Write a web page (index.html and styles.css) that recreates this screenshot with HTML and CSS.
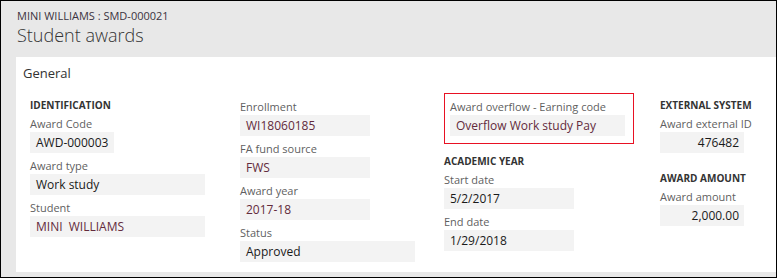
FILE: index.html
```html
<!DOCTYPE html>
<html lang="en">
<head>
    <meta charset="UTF-8">
    <title>Student awards</title>
    <link rel="stylesheet" href="styles.css">
</head>
<body>
    <div class="page">
        <div class="header">
            <div class="crumb">MINI WILLIAMS : SMD-000021</div>
            <div class="title">Student awards</div>
        </div>
        <div class="card">
            <div class="card-title">General</div>
            <div class="columns">
                <div class="col col-1">
                    <div class="group-title">IDENTIFICATION</div>
                    <div class="field">
                        <div class="label">Award Code</div>
                        <div class="value w-short">AWD-000003</div>
                    </div>
                    <div class="field">
                        <div class="label">Award type</div>
                        <div class="value w-wide">Work study</div>
                    </div>
                    <div class="field">
                        <div class="label">Student</div>
                        <div class="value w-wide link">MINI&nbsp; WILLIAMS</div>
                    </div>
                </div>
                <div class="col col-2">
                    <div class="field">
                        <div class="label">Enrollment</div>
                        <div class="value w-mid link">WI18060185</div>
                    </div>
                    <div class="field">
                        <div class="label">FA fund source</div>
                        <div class="value w-mid link">FWS</div>
                    </div>
                    <div class="field">
                        <div class="label">Award year</div>
                        <div class="value w-mid link">2017-18</div>
                    </div>
                    <div class="field">
                        <div class="label">Status</div>
                        <div class="value w-wide">Approved</div>
                    </div>
                </div>
                <div class="col col-3">
                    <div class="highlight">
                        <div class="field">
                            <div class="label">Award overflow - Earning code</div>
                            <div class="value w-wide link">Overflow Work study Pay</div>
                        </div>
                    </div>
                    <div class="group-title spaced">ACADEMIC YEAR</div>
                    <div class="field">
                        <div class="label">Start date</div>
                        <div class="value w-mid">5/2/2017</div>
                    </div>
                    <div class="field">
                        <div class="label">End date</div>
                        <div class="value w-mid">1/29/2018</div>
                    </div>
                </div>
                <div class="col col-4">
                    <div class="group-title">EXTERNAL SYSTEM</div>
                    <div class="field">
                        <div class="label">Award external ID</div>
                        <div class="value w-short num">476482</div>
                    </div>
                    <div class="group-title spaced-2">AWARD AMOUNT</div>
                    <div class="field">
                        <div class="label">Award amount</div>
                        <div class="value w-short num">2,000.00</div>
                    </div>
                </div>
            </div>
        </div>
    </div>
</body>
</html>
```

FILE: styles.css
```css
* {
    box-sizing: border-box;
}
body {
    margin: 0;
    font-family: "Segoe UI", "Open Sans", sans-serif;
    color: #212121;
}
.page {
    width: 777px;
    height: 278px;
    border: 1px solid #000;
    background: #e8e8e8;
    display: flex;
    flex-direction: column;
}
.header {
    height: 56px;
    padding: 8px 0 0 16px;
}
.crumb {
    font-size: 11px;
    line-height: 14px;
    color: #3b3340;
}
.title {
    font-size: 18px;
    font-weight: 300;
    line-height: 24px;
    color: #333;
}
.card {
    background: #fff;
    margin-left: 15px;
    height: 215px;
    padding: 6px 0 0 7px;
}
.card-title {
    font-size: 13px;
    line-height: 20px;
    color: #333;
}
.columns {
    display: flex;
    margin-top: 11px;
    padding-left: 7px;
}
.col {
    flex-shrink: 0;
}
.col-1 {
    width: 210px;
}
.col-2 {
    width: 204px;
}
.col-3 {
    width: 216px;
    margin-top: -1px;
}
.col-4 {
    width: 110px;
}
.group-title {
    font-size: 10px;
    font-weight: bold;
    line-height: 17px;
    height: 17px;
    padding-top: 3px;
    color: #333;
}
.group-title.spaced {
    margin-top: 6px;
}
.group-title.spaced-2 {
    margin-top: 14px;
}
.label {
    font-size: 11px;
    line-height: 14px;
    height: 21px;
    padding-top: 6px;
    color: #5f5f5f;
}
.value {
    height: 21px;
    line-height: 21px;
    font-size: 12px;
    padding: 0 6px;
    background: #f3f3f3;
    color: #1a1a1a;
    white-space: nowrap;
}
.value.link {
    color: #632b3c;
}
.value.num {
    text-align: right;
    padding-right: 5px;
}
.w-short {
    width: 84px;
}
.w-mid {
    width: 130px;
}
.w-wide {
    width: 175px;
}
.highlight {
    width: 190px;
    border: 1px solid #e81123;
    padding: 0 8px 7px 5px;
}
```
